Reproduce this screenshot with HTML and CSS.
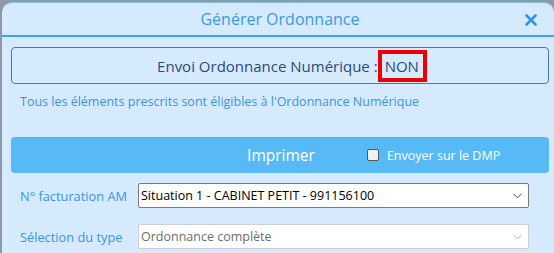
FILE: index.html
```html
<!DOCTYPE html>
<html lang="fr">
<head>
<meta charset="utf-8">
<title>Générer Ordonnance</title>
<link rel="stylesheet" href="styles.css">
</head>
<body>
<div class="window">
  <div class="header">
    <span class="title">Générer Ordonnance</span>
    <span class="close"><svg width="12" height="12" viewBox="0 0 12 12"><path d="M1.5 1.5 L10.5 10.5 M10.5 1.5 L1.5 10.5" stroke="#2f95e2" stroke-width="2.6" stroke-linecap="round"/></svg></span>
  </div>
  <div class="content">
    <div class="status">Envoi Ordonnance Numérique : <span class="non">NON</span></div>
    <p class="note">Tous les éléments prescrits sont éligibles à l'Ordonnance Numérique</p>
    <div class="printbar">
      <span class="print">Imprimer</span>
      <label class="dmp"><span class="cb"></span>Envoyer sur le DMP</label>
    </div>
    <div class="row">
      <span class="label">N° facturation AM</span>
      <div class="select">Situation 1 - CABINET PETIT - 991156100<svg class="chev" width="9" height="6" viewBox="0 0 9 6"><path d="M0.5 0.8 L4.5 4.8 L8.5 0.8" fill="none" stroke="#444" stroke-width="1"/></svg></div>
    </div>
    <div class="row second">
      <span class="label">Sélection du type</span>
      <div class="select disabled">Ordonnance complète<svg class="chev" width="9" height="6" viewBox="0 0 9 6"><path d="M0.5 0.8 L4.5 4.8 L8.5 0.8" fill="none" stroke="#b0b0b0" stroke-width="1"/></svg></div>
    </div>
  </div>
</div>
</body>
</html>
```
FILE: styles.css
```css
html, body {
  margin: 0;
  padding: 0;
  height: 100%;
  overflow: hidden;
}
body {
  background: #8d9aa5;
  font-family: "Open Sans", "Noto Sans", sans-serif;
}
.window {
  margin: 2px 0 0 2px;
  height: 260px;
  background: #d6eafd;
  border-radius: 10px 10px 0 0;
  border-top: 1px solid #7cc2f4;
  box-sizing: border-box;
}
.header {
  height: 32px;
  border-bottom: 2px solid #3ba3ef;
  display: flex;
  align-items: center;
  justify-content: center;
  position: relative;
}
.title {
  color: #3b9ae0;
  font-size: 16px;
  margin-left: 4px;
}
.close {
  position: absolute;
  right: 17px;
  top: 11px;
  line-height: 0;
}
.content {
  padding: 10px 5px 0 9px;
}
.status {
  height: 35px;
  border: 1px solid #4d78ae;
  border-radius: 4px;
  display: flex;
  align-items: center;
  justify-content: center;
  color: #2b4a76;
  font-size: 15px;
  padding-left: 24px;
}
.non {
  border: 4px solid #ee0000;
  height: 24px;
  line-height: 24px;
  padding: 0 4px 0 3px;
}
.note {
  margin: 10px 0 27px 9px;
  color: #3696e0;
  font-size: 12.5px;
  line-height: 16px;
  height: 16px;
}
.printbar {
  height: 36px;
  background: #58b9f7;
  border-radius: 4px;
  display: grid;
  grid-template-columns: 1fr auto 1fr;
  align-items: center;
  color: #ffffff;
}
.print {
  grid-column: 2;
  font-size: 15.5px;
  margin-left: 2px;
}
.dmp {
  grid-column: 3;
  display: flex;
  align-items: center;
  font-size: 12.5px;
  margin-left: 52px;
}
.cb {
  width: 10px;
  height: 10px;
  border: 1px solid #555;
  border-radius: 2px;
  background: #f1f1f1;
  margin-right: 8px;
}
.row {
  display: flex;
  align-items: center;
  margin-top: 10px;
}
.row.second {
  margin-top: 16px;
}
.label {
  width: 118px;
  padding-left: 9px;
  color: #3696e0;
  font-size: 12.8px;
}
.select {
  width: 391px;
  height: 25px;
  box-sizing: border-box;
  background: #ffffff;
  border: 1px solid #7a7a7a;
  border-radius: 2px;
  display: flex;
  align-items: center;
  padding-left: 2px;
  font-size: 12.5px;
  color: #000;
}
.select.disabled {
  border-color: #cfcfcf;
  color: #6d6d6d;
}
.chev {
  margin-left: auto;
  margin-right: 6px;
}
```
